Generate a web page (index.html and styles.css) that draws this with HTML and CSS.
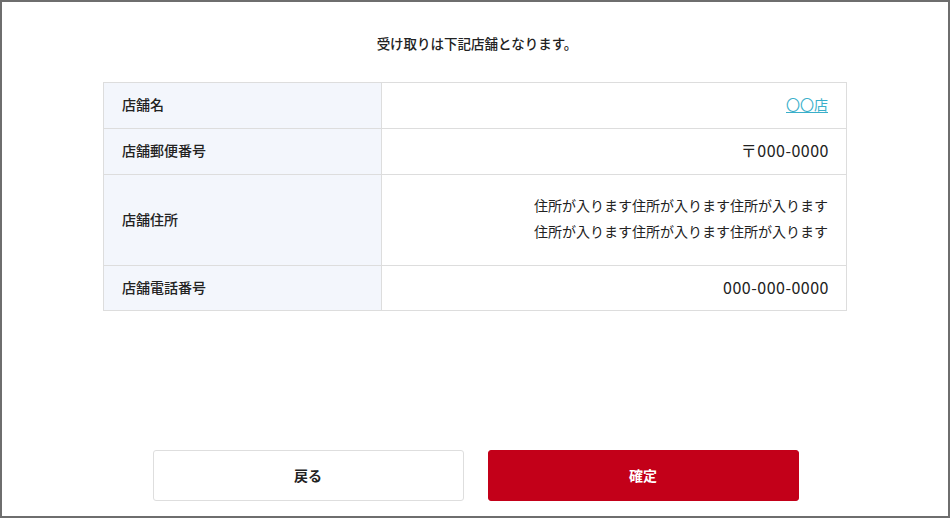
FILE: index.html
```html
<!DOCTYPE html>
<html lang="ja">
<head>
<meta charset="utf-8">
<link rel="stylesheet" href="styles.css">
</head>
<body>
<div class="frame">
  <p class="lead">受け取りは下記店舗となります。</p>
  <div class="table">
    <div class="row r-name">
      <div class="label">店舗名</div>
      <div class="value"><a class="link" href="#">〇〇店</a></div>
    </div>
    <div class="row r-zip">
      <div class="label">店舗郵便番号</div>
      <div class="value num">〒000-0000</div>
    </div>
    <div class="row r-addr">
      <div class="label">店舗住所</div>
      <div class="value addr">住所が入ります住所が入ります住所が入ります<br>住所が入ります住所が入ります住所が入ります</div>
    </div>
    <div class="row r-tel">
      <div class="label">店舗電話番号</div>
      <div class="value num">000-000-0000</div>
    </div>
  </div>
  <div class="spacer"></div>
  <div class="actions">
    <button class="btn btn-back">戻る</button>
    <button class="btn btn-ok">確定</button>
  </div>
</div>
</body>
</html>
```
FILE: styles.css
```css
* { box-sizing: border-box; }
html, body {
  margin: 0;
  padding: 0;
  background: #ffffff;
}
body {
  font-family: "Noto Sans CJK JP", "Noto Sans", sans-serif;
  color: #222222;
}
.frame {
  width: 950px;
  height: 518px;
  border: 2px solid #6e6e6e;
  display: flex;
  flex-direction: column;
  align-items: center;
  padding: 31px 0 15px;
}
.lead {
  margin: 0;
  font-size: 13.5px;
  line-height: 20px;
  font-weight: 500;
  color: #222;
  padding-left: 4px;
}
.table {
  margin-top: 29px;
  width: 744px;
  border: 1px solid #dddddd;
  border-bottom: none;
}
.row {
  display: grid;
  grid-template-columns: 278px 1fr;
  border-bottom: 1px solid #dddddd;
}
.r-name, .r-zip { height: 46px; }
.r-addr { height: 91px; }
.r-tel { height: 45px; }
.label {
  background: #f3f6fc;
  border-right: 1px solid #dddddd;
  display: flex;
  align-items: center;
  padding-left: 18px;
  padding-bottom: 3px;
  font-size: 14px;
  font-weight: 500;
  color: #222;
}
.value {
  display: flex;
  align-items: center;
  justify-content: flex-end;
  padding-right: 18px;
  padding-bottom: 3px;
  font-size: 14px;
  color: #222;
}
.link {
  color: #3aafca;
  text-decoration: underline;
  text-underline-offset: 2px;
  font-size: 14px;
}
.num {
  font-size: 16px;
  letter-spacing: 0.5px;
  padding-right: 17px;
}
.addr {
  text-align: right;
  line-height: 26px;
  padding-bottom: 5px;
}
.spacer { flex: 1; }
.actions {
  display: flex;
  gap: 24px;
  margin-left: 1px;
}
.btn {
  width: 311px;
  height: 51px;
  border-radius: 3px;
  font-family: "Noto Sans CJK JP", sans-serif;
  font-size: 14px;
  font-weight: 700;
  padding-bottom: 2px;
  cursor: pointer;
}
.btn-back {
  background: #ffffff;
  border: 1px solid #dedede;
  color: #222;
}
.btn-ok {
  background: #c30019;
  border: 1px solid #c30019;
  color: #ffffff;
}
```
